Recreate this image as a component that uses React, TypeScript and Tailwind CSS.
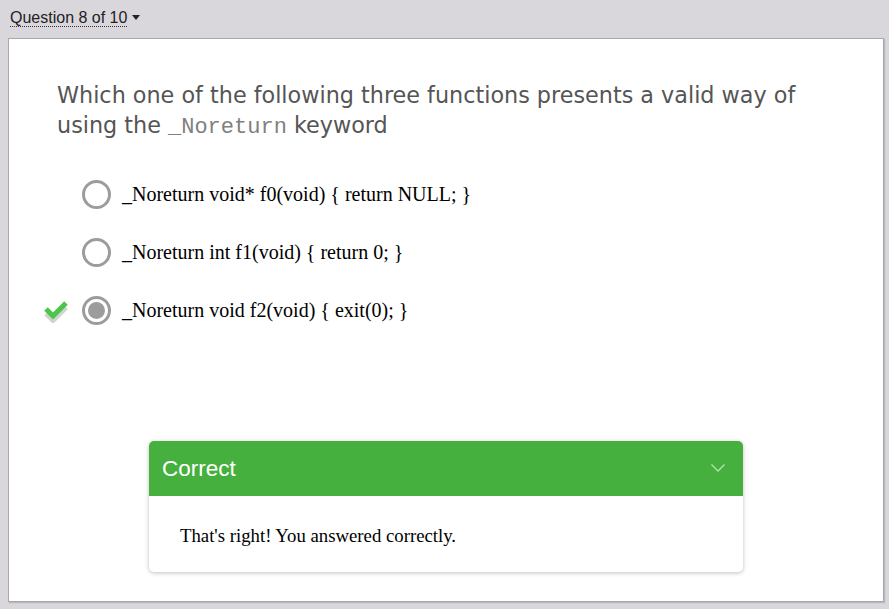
const options = [
  { text: "_Noreturn void* f0(void) { return NULL; }", selected: false },
  { text: "_Noreturn int f1(void) { return 0; }", selected: false },
  { text: "_Noreturn void f2(void) { exit(0); }", selected: true },
]

function Check() {
  return (
    <svg width="26" height="24" viewBox="0 0 26 24" className="block">
      <polyline points="3,12 10,19 23,6" fill="none" stroke="#d2d2d2" strokeWidth="5" strokeLinejoin="miter" transform="translate(0,2.5)" />
      <polyline points="3,10 10,17 23,4" fill="none" stroke="#4cc54a" strokeWidth="5" strokeLinejoin="miter" />
    </svg>
  )
}

export default function App() {
  return (
    <div className="min-h-[609px] bg-[#d9d7dc] px-2 pt-[7px] pb-[7px] font-['Liberation_Sans',Arial,sans-serif]">
      <div className="flex h-[22px] items-center pl-[2px] text-[16px] text-[#222]">
        <span className="border-b border-dotted border-[#333] leading-[17px]">Question 8 of 10</span>
        <span className="ml-[5px] mt-[-2px] h-0 w-0 border-x-[4.5px] border-t-[5px] border-x-transparent border-t-[#222]" />
      </div>
      <div className="mt-[9px] h-[564px] w-[876px] border border-[#a9a9ab] bg-white shadow-[1px_1px_1px_rgba(0,0,0,0.15)]">
        <div className="pl-[48px] pr-[66px] pt-[41px]">
          <h1 className="font-['DejaVu_Sans',Verdana,sans-serif] text-[22.3px] leading-[30px] text-[#555]">
            Which one of the following three functions presents a valid way of using the{" "}
            <code className="font-['Liberation_Mono','Courier_New',monospace] text-[22px] text-[#808080]">_Noreturn</code>{" "}
            keyword
          </h1>
        </div>
        <div className="mt-[36px] flex flex-col gap-[28px] pl-[34px]">
          {options.map((o) => (
            <div key={o.text} className="flex h-[30px] items-center">
              <div className="w-[39px] pt-[2px]">{o.selected && <Check />}</div>
              <div className="flex h-[29px] w-[29px] items-center justify-center rounded-full border-[3px] border-[#9c9c9c]">
                {o.selected && <div className="h-[17px] w-[17px] rounded-full bg-[#9c9c9c]" />}
              </div>
              <span className="ml-[11px] font-['Liberation_Serif','Times_New_Roman',serif] text-[20px] text-black">
                {o.text}
              </span>
            </div>
          ))}
        </div>
        <div className="mx-auto mt-[116px] w-[594px] overflow-hidden rounded-[5px] bg-white shadow-[0_1px_4px_rgba(0,0,0,0.25)]">
          <div className="flex h-[55px] items-center justify-between bg-[#45b03e] pl-[13px] pr-[18px]">
            <span className="text-[22.5px] text-white">Correct</span>
            <svg width="14" height="8" viewBox="0 0 14 8" className="mt-[-2px]">
              <polyline points="0.5,0.5 7,7 13.5,0.5" fill="none" stroke="#b6e2b2" strokeWidth="1.3" />
            </svg>
          </div>
          <div className="flex h-[76px] items-center pl-[31px] pt-[4px] font-['Liberation_Serif','Times_New_Roman',serif] text-[18.75px] text-black">
            That's right! You answered correctly.
          </div>
        </div>
      </div>
    </div>
  )
}
